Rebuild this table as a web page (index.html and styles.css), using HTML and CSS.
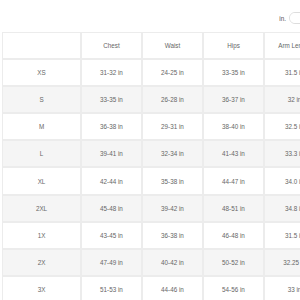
FILE: index.html
```html
<!DOCTYPE html>
<html>
<head>
<meta charset="utf-8">
<link rel="stylesheet" href="styles.css">
</head>
<body>
<div class="page">
  <div class="topbar">
    <span class="unit">in.</span>
    <span class="switch"><span class="knob"></span></span>
  </div>
  <div class="chart">
    <div class="row head">
      <div class="cell first"></div>
      <div class="cell">Chest</div>
      <div class="cell">Waist</div>
      <div class="cell">Hips</div>
      <div class="cell">Arm Length</div>
    </div>
    <div class="row">
      <div class="cell first">XS</div><div class="cell">31-32 in</div><div class="cell">24-25 in</div><div class="cell">33-35 in</div><div class="cell">31.5 in</div>
    </div>
    <div class="row alt">
      <div class="cell first">S</div><div class="cell">33-35 in</div><div class="cell">26-28 in</div><div class="cell">36-37 in</div><div class="cell">32 in</div>
    </div>
    <div class="row">
      <div class="cell first">M</div><div class="cell">36-38 in</div><div class="cell">29-31 in</div><div class="cell">38-40 in</div><div class="cell">32.5 in</div>
    </div>
    <div class="row alt">
      <div class="cell first">L</div><div class="cell">39-41 in</div><div class="cell">32-34 in</div><div class="cell">41-43 in</div><div class="cell">33.3 in</div>
    </div>
    <div class="row">
      <div class="cell first">XL</div><div class="cell">42-44 in</div><div class="cell">35-38 in</div><div class="cell">44-47 in</div><div class="cell">34.0 in</div>
    </div>
    <div class="row alt">
      <div class="cell first">2XL</div><div class="cell">45-48 in</div><div class="cell">39-42 in</div><div class="cell">48-51 in</div><div class="cell">34.8 in</div>
    </div>
    <div class="row">
      <div class="cell first">1X</div><div class="cell">43-45 in</div><div class="cell">36-38 in</div><div class="cell">46-48 in</div><div class="cell">31.5 in</div>
    </div>
    <div class="row alt">
      <div class="cell first">2X</div><div class="cell">47-49 in</div><div class="cell">40-42 in</div><div class="cell">50-52 in</div><div class="cell">32.25 in</div>
    </div>
    <div class="row">
      <div class="cell first">3X</div><div class="cell">51-53 in</div><div class="cell">44-46 in</div><div class="cell">54-56 in</div><div class="cell">33 in</div>
    </div>
  </div>
</div>
</body>
</html>
```
FILE: styles.css
```css
html, body {
  margin: 0;
  padding: 0;
  overflow: hidden;
  background: #ffffff;
}
.page {
  padding: 12px 0 0 2px;
  width: 323px;
  font-family: "Liberation Sans", Arial, sans-serif;
  font-size: 6.3px;
  color: #666666;
}
.topbar {
  display: flex;
  justify-content: flex-end;
  align-items: center;
  gap: 3px;
  height: 12px;
  margin-bottom: 8px;
}
.unit {
  color: #555555;
}
.switch {
  display: block;
  width: 36px;
  height: 12px;
  box-sizing: border-box;
  border: 1px solid #dddddd;
  border-radius: 6px;
  position: relative;
}
.knob {
  position: absolute;
  left: 0;
  top: 0;
  width: 10px;
  height: 10px;
  border-radius: 50%;
  background: #ffffff;
}
.chart {
  display: flex;
  flex-direction: column;
}
.row {
  display: flex;
  height: 27.1px;
}
.row.alt {
  background: #f5f5f5;
}
.cell {
  box-sizing: border-box;
  width: 61px;
  flex: none;
  border: 1px solid #ececec;
  display: flex;
  align-items: center;
  justify-content: center;
  white-space: nowrap;
}
.cell.first {
  width: 79px;
}
```
